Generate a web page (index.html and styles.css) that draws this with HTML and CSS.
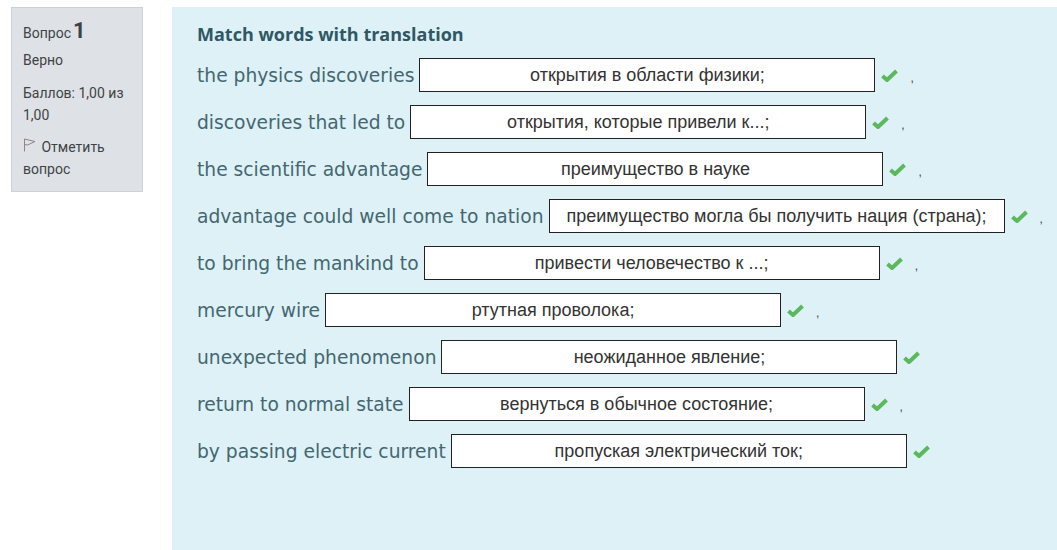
FILE: index.html
```html
<!DOCTYPE html>
<html lang="ru">
<head>
<meta charset="UTF-8" />
<meta name="viewport" content="width=device-width, initial-scale=1" />
<title>Вопрос 1</title>
<link rel="stylesheet" href="styles.css">
</head>
<body>

<div class="page">
  <div class="info">
    <h3 class="no">Вопрос<span class="qno">1</span></h3>
    <div class="state">Верно</div>
    <div class="grade">Баллов: 1,00 из 1,00</div>
    <div class="flag">
      <svg class="flag-icon" width="13" height="14" viewBox="0 0 13 14">
        <path d="M1.5 13.5 L1.5 1 L12 3.5 L4.5 7 L1.5 6.5" fill="none" stroke="#888" stroke-width="1"/>
      </svg>
      Отметить вопрос
    </div>
  </div>

  <div class="content">
    <h4 class="qtext">Match words with translation</h4>
    <div class="answers" id="answers"></div>
  </div>
</div>

<script>
  const rows = [
    ['the physics discoveries', 'открытия в области физики;', true],
    ['discoveries that led to', 'открытия, которые привели к...;', true],
    ['the scientific advantage', 'преимущество в науке', true],
    ['advantage could well come to nation', 'преимущество могла бы получить нация (страна);', true],
    ['to bring the mankind to', 'привести человечество к ...;', true],
    ['mercury wire', 'ртутная проволока;', true],
    ['unexpected phenomenon', 'неожиданное явление;', false],
    ['return to normal state', 'вернуться в обычное состояние;', true],
    ['by passing electric current', 'пропуская электрический ток;', false]
  ];

  const answersEl = document.getElementById('answers');

  rows.forEach(([label, value, comma]) => {
    const row = document.createElement('div');
    row.className = 'row';

    const lbl = document.createElement('span');
    lbl.className = 'label';
    lbl.textContent = label;
    row.appendChild(lbl);

    const box = document.createElement('span');
    box.className = 'box';
    box.textContent = value;
    row.appendChild(box);

    row.insertAdjacentHTML('beforeend',
      '<svg class="check" width="19" height="15" viewBox="0 0 19 15">' +
      '<path d="M2.5 8 L7 12 L16.5 3" fill="none" stroke="#5cb85c" stroke-width="4" stroke-linejoin="round"/></svg>');

    if (comma) {
      const c = document.createElement('span');
      c.className = 'comma';
      c.textContent = ',';
      row.appendChild(c);
    }

    answersEl.appendChild(row);
  });
</script>

</body>
</html>
```

FILE: styles.css
```css
body {
  margin: 0;
  padding: 7px 0 0 11px;
  background: #fff;
  font-family: Roboto, 'Noto Sans', sans-serif;
  overflow: hidden;
}
.page {
  display: flex;
  align-items: flex-start;
  gap: 29px;
}
.info {
  width: 108px;
  flex: none;
  padding: 10px 11px 11px 11px;
  background: #dee2e6;
  border: 1px solid #cdd2d7;
  color: #3e4245;
  font-size: 14px;
  line-height: 22px;
}
.no {
  margin: 0 0 3px;
  font-size: 14px;
  font-weight: 400;
  line-height: 26px;
}
.qno {
  font-size: 22px;
  font-weight: 700;
  margin-left: 2px;
}
.state {
  margin-bottom: 11px;
}
.grade {
  margin-bottom: 10px;
}
.flag-icon {
  margin-right: 2px;
}
.content {
  flex: 1;
  min-height: 543px;
  background: #def1f7;
  padding: 17px 0 0 25px;
  color: #44676f;
  font-family: 'DejaVu Sans', sans-serif;
}
.qtext {
  margin: 0 0 14px;
  font-family: 'Open Sans', sans-serif;
  font-size: 18px;
  font-weight: 700;
  color: #2f5764;
  line-height: 20px;
}
.row {
  display: flex;
  align-items: center;
  height: 34px;
  margin-bottom: 13px;
  white-space: nowrap;
}
.label {
  font-size: 18.7px;
  margin-right: 5px;
}
.box {
  box-sizing: border-box;
  width: 456px;
  height: 34px;
  border: 1px solid #222;
  background: #fff;
  color: #333;
  font-family: 'Liberation Sans', Arial, sans-serif;
  font-size: 18px;
  line-height: 32px;
  text-align: center;
  overflow: hidden;
}
.check {
  margin-left: 5px;
}
.comma {
  margin-left: 11px;
  color: #444;
  font-family: 'Liberation Sans', Arial, sans-serif;
  font-size: 12px;
  position: relative;
  top: 3px;
}
```
